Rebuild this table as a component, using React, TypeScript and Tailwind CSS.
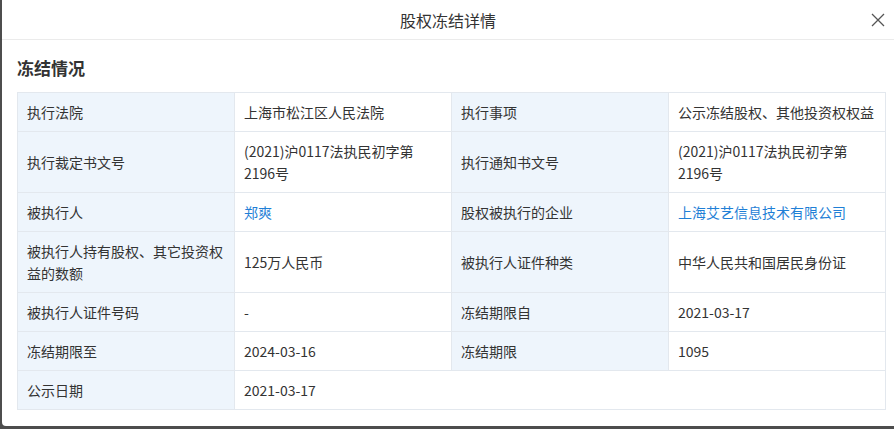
import React from 'react';

type Cell = { text: string; link?: boolean };

const rows: [string, Cell, string, Cell][] = [
  ['执行法院', { text: '上海市松江区人民法院' }, '执行事项', { text: '公示冻结股权、其他投资权权益' }],
  ['执行裁定书文号', { text: '(2021)沪0117法执民初字第2196号' }, '执行通知书文号', { text: '(2021)沪0117法执民初字第2196号' }],
  ['被执行人', { text: '郑爽', link: true }, '股权被执行的企业', { text: '上海艾艺信息技术有限公司', link: true }],
  ['被执行人持有股权、其它投资权益的数额', { text: '125万人民币' }, '被执行人证件种类', { text: '中华人民共和国居民身份证' }],
  ['被执行人证件号码', { text: '-' }, '冻结期限自', { text: '2021-03-17' }],
  ['冻结期限至', { text: '2024-03-16' }, '冻结期限', { text: '1095' }],
];

const labelCls = 'bg-[#eef5fc] border border-[#e3e8ee] px-[9px] py-[8px] align-middle w-[217px] text-[#333]';
const valueCls = 'bg-white border border-[#e3e8ee] px-[9px] py-[8px] align-middle w-[217px] text-[#333]';

function Value({ cell }: { cell: Cell }) {
  return <span className={cell.link ? 'text-[#1f7fd6]' : ''}>{cell.text}</span>;
}

export default function App() {
  return (
    <div
      className="w-[894px] h-[429px] bg-[#4d4d4d] overflow-hidden"
      style={{ fontFamily: '"Microsoft YaHei", "Noto Sans CJK SC", "Noto Sans", sans-serif' }}
    >
      <div className="ml-[2px] w-[892px] h-[426px] bg-white rounded-bl-[4px] flex flex-col">
        <div className="relative h-[40px] border-b border-[#ebebeb] flex items-center justify-center">
          <span className="text-[16px] text-[#333]">股权冻结详情</span>
          <svg className="absolute right-[8px] top-[12px]" width="16" height="16" viewBox="0 0 16 16">
            <path d="M2 2 L14 14 M14 2 L2 14" stroke="#555" strokeWidth="1.3" fill="none" />
          </svg>
        </div>
        <div className="px-[15px]">
          <h2 className="text-[17px] font-bold text-[#333] leading-[24px] mt-[16px] mb-[12px]">冻结情况</h2>
          <table className="w-[868px] border-collapse text-[14px] leading-[22px] table-fixed">
            <tbody>
              {rows.map((r, i) => (
                <tr key={i}>
                  <td className={labelCls}>{r[0]}</td>
                  <td className={valueCls}>
                    <Value cell={r[1]} />
                  </td>
                  <td className={labelCls}>{r[2]}</td>
                  <td className={valueCls}>
                    <Value cell={r[3]} />
                  </td>
                </tr>
              ))}
              <tr>
                <td className={labelCls}>公示日期</td>
                <td className={valueCls} colSpan={3}>
                  2021-03-17
                </td>
              </tr>
            </tbody>
          </table>
        </div>
      </div>
    </div>
  );
}
